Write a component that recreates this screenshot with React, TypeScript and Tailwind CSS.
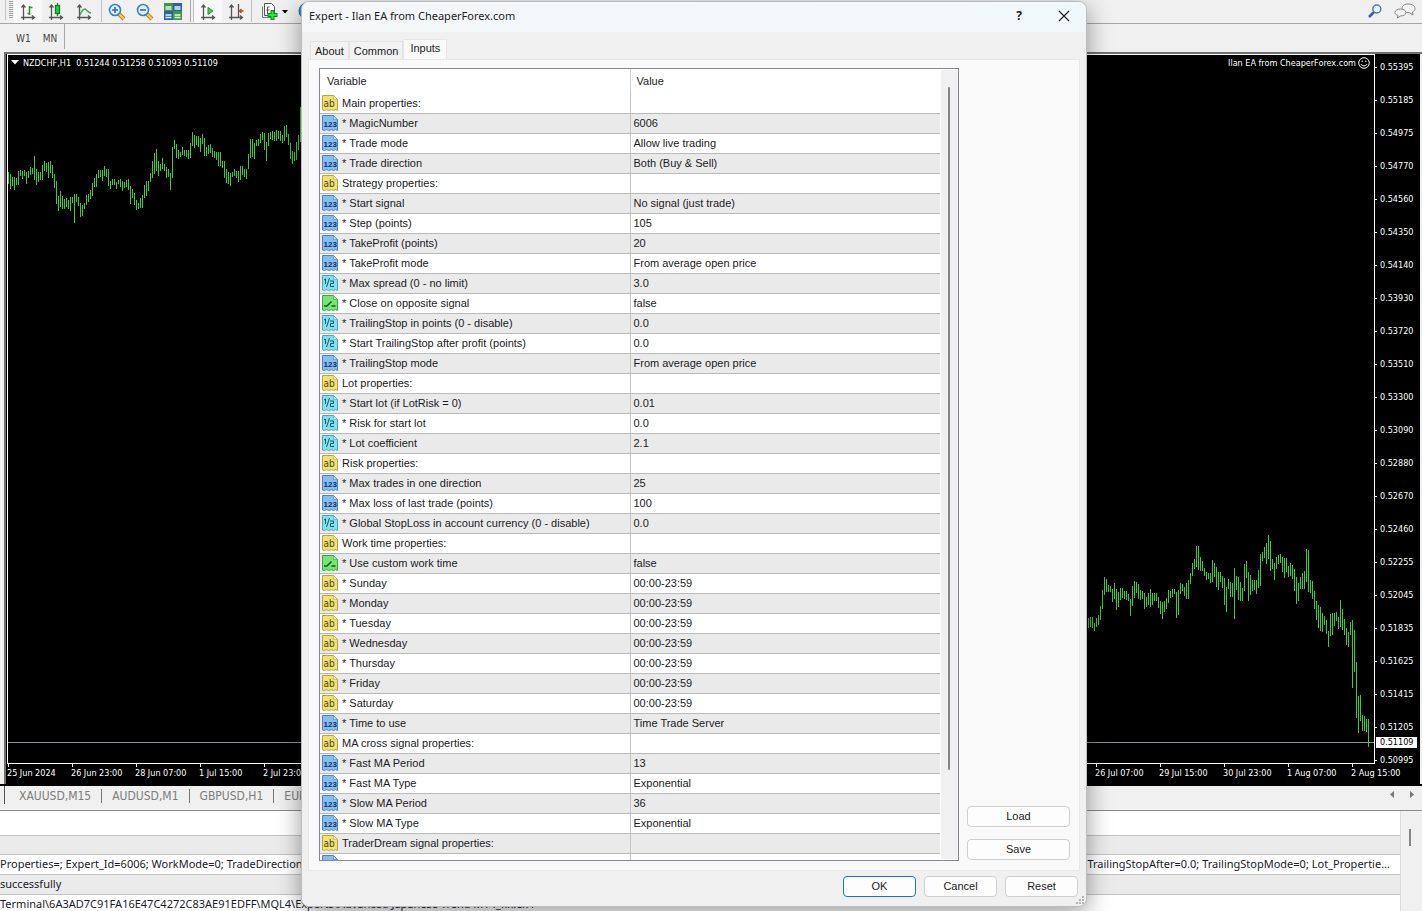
import { useState } from "react"
import type { ReactNode } from "react"

type ParamKind = "text" | "int" | "double" | "bool"

type ParamType = {
  kind: ParamKind
  name: string
  value: string
}

const params: ParamType[] = [
  { kind: "text", name: "Main properties:", value: "" },
  { kind: "int", name: "* MagicNumber", value: "6006" },
  { kind: "int", name: "* Trade mode", value: "Allow live trading" },
  { kind: "int", name: "* Trade direction", value: "Both (Buy & Sell)" },
  { kind: "text", name: "Strategy properties:", value: "" },
  { kind: "int", name: "* Start signal", value: "No signal (just trade)" },
  { kind: "int", name: "* Step (points)", value: "105" },
  { kind: "int", name: "* TakeProfit (points)", value: "20" },
  { kind: "int", name: "* TakeProfit mode", value: "From average open price" },
  { kind: "double", name: "* Max spread (0 - no limit)", value: "3.0" },
  { kind: "bool", name: "* Close on opposite signal", value: "false" },
  { kind: "double", name: "* TrailingStop in points (0 - disable)", value: "0.0" },
  { kind: "double", name: "* Start TrailingStop after profit (points)", value: "0.0" },
  { kind: "int", name: "* TrailingStop mode", value: "From average open price" },
  { kind: "text", name: "Lot properties:", value: "" },
  { kind: "double", name: "* Start lot (if LotRisk = 0)", value: "0.01" },
  { kind: "double", name: "* Risk for start lot", value: "0.0" },
  { kind: "double", name: "* Lot coefficient", value: "2.1" },
  { kind: "text", name: "Risk properties:", value: "" },
  { kind: "int", name: "* Max trades in one direction", value: "25" },
  { kind: "int", name: "* Max loss of last trade (points)", value: "100" },
  { kind: "double", name: "* Global StopLoss in account currency (0 - disable)", value: "0.0" },
  { kind: "text", name: "Work time properties:", value: "" },
  { kind: "bool", name: "* Use custom work time", value: "false" },
  { kind: "text", name: "* Sunday", value: "00:00-23:59" },
  { kind: "text", name: "* Monday", value: "00:00-23:59" },
  { kind: "text", name: "* Tuesday", value: "00:00-23:59" },
  { kind: "text", name: "* Wednesday", value: "00:00-23:59" },
  { kind: "text", name: "* Thursday", value: "00:00-23:59" },
  { kind: "text", name: "* Friday", value: "00:00-23:59" },
  { kind: "text", name: "* Saturday", value: "00:00-23:59" },
  { kind: "int", name: "* Time to use", value: "Time Trade Server" },
  { kind: "text", name: "MA cross signal properties:", value: "" },
  { kind: "int", name: "* Fast MA Period", value: "13" },
  { kind: "int", name: "* Fast MA Type", value: "Exponential" },
  { kind: "int", name: "* Slow MA Period", value: "36" },
  { kind: "int", name: "* Slow MA Type", value: "Exponential" },
  { kind: "text", name: "TraderDream signal properties:", value: "" },
  { kind: "int", name: "", value: "" },
]

const prices = [
  "0.55395", "0.55185", "0.54975", "0.54770", "0.54560", "0.54350", "0.54140", "0.53930",
  "0.53720", "0.53510", "0.53300", "0.53090", "0.52880", "0.52670", "0.52460", "0.52255",
  "0.52045", "0.51835", "0.51625", "0.51415", "0.51205", "0.50995",
]

const datesLeft = ["25 Jun 2024", "26 Jun 23:00", "28 Jun 07:00", "1 Jul 15:00", "2 Jul 23:00"]
const datesRight = ["26 Jul 07:00", "29 Jul 15:00", "30 Jul 23:00", "1 Aug 07:00", "2 Aug 15:00"]

// high/low of each bar, three units to a pixel
const barsLeft = [
  [247, 282], [252, 297], [262, 290], [262, 300], [265, 285], [242, 283], [240, 258], [243, 267],
  [241, 258], [246, 283], [244, 264], [231, 254], [235, 252], [197, 268], [237, 284], [246, 275],
  [247, 270], [225, 270], [212, 243], [220, 248], [215, 262], [213, 248], [225, 265], [252, 293],
  [272, 342], [318, 362], [304, 352], [318, 357], [326, 357], [325, 352], [330, 357], [320, 362],
  [322, 340], [312, 400], [312, 335], [320, 348], [338, 380], [344, 378], [340, 357], [316, 347],
  [313, 337], [300, 328], [280, 318], [265, 293], [253, 293], [241, 265], [241, 262], [241, 275],
  [229, 260], [237, 262], [237, 287], [272, 297], [268, 285], [267, 284], [275, 295], [270, 282],
  [267, 292], [273, 304], [275, 292], [270, 290], [267, 300], [288, 342], [298, 326], [308, 345],
  [330, 360], [338, 356], [325, 355], [316, 356], [286, 326], [272, 317], [272, 302], [250, 277],
  [213, 265], [190, 252], [177, 242], [213, 257], [222, 243], [205, 238], [222, 243], [230, 264],
  [237, 262], [250, 300], [172, 264], [150, 176], [162, 204], [180, 206], [186, 201], [172, 197],
  [180, 199], [180, 200], [180, 207], [159, 204], [126, 168], [136, 176], [137, 165], [138, 170],
  [144, 187], [132, 162], [144, 199], [170, 197], [165, 193], [163, 190], [175, 203], [184, 205],
  [187, 210], [187, 230], [186, 228], [212, 232], [212, 262], [237, 280], [245, 282], [249, 288],
  [247, 263], [238, 260], [242, 263], [243, 275], [229, 272], [229, 257], [237, 260], [237, 266],
  [192, 237], [148, 205], [147, 200], [158, 206], [150, 167], [147, 168], [132, 158], [126, 150],
  [130, 182], [155, 213], [129, 168], [126, 148], [124, 150], [126, 153], [121, 153], [123, 147],
  [122, 152], [135, 158], [107, 152], [106, 142], [132, 166], [158, 206], [183, 221], [186, 213],
  [155, 208], [136, 180], [50, 155],
]

const barsRight = [
  [293, 323], [290, 320], [290, 322], [308, 332], [295, 322], [285, 315], [258, 300], [210, 268],
  [171, 225], [178, 217], [195, 217], [198, 217], [207, 245], [190, 238], [208, 270], [216, 262],
  [204, 240], [204, 235], [213, 238], [213, 240], [222, 242], [238, 288], [198, 257], [183, 235],
  [185, 218], [192, 237], [211, 240], [212, 235], [218, 266], [230, 260], [220, 257], [207, 260],
  [220, 256], [219, 243], [220, 245], [232, 266], [243, 283], [246, 297], [242, 275], [234, 266],
  [210, 248], [213, 235], [208, 232], [208, 222], [216, 293], [211, 286], [190, 222], [193, 213],
  [202, 230], [190, 238], [180, 236], [160, 192], [130, 168], [116, 145], [78, 140], [78, 150],
  [110, 153], [123, 152], [144, 168], [155, 178], [160, 178], [160, 190], [120, 187], [128, 170],
  [140, 200], [157, 212], [155, 185], [168, 203], [175, 257], [200, 275], [178, 207], [187, 232],
  [190, 232], [145, 297], [168, 210], [170, 238], [185, 243], [205, 245], [132, 213], [122, 172],
  [155, 242], [165, 225], [180, 213], [180, 210], [180, 222], [150, 205], [103, 200], [95, 122],
  [80, 113], [68, 132], [44, 115], [62, 152], [118, 148], [128, 180], [110, 145], [105, 132],
  [102, 130], [110, 155], [113, 174], [115, 158], [138, 172], [128, 168], [135, 178], [148, 213],
  [172, 252], [188, 242], [170, 205], [158, 205], [152, 207], [87, 185], [90, 215], [180, 218],
  [182, 237], [213, 267], [243, 300], [256, 325], [262, 335], [278, 335], [288, 315], [300, 343],
  [333, 382], [283, 348], [280, 345], [280, 318], [276, 302], [290, 327], [240, 320], [268, 330],
  [298, 345], [325, 375], [335, 380], [305, 345], [300, 503], [330, 457], [425, 592], [528, 640],
  [525, 602], [585, 633], [587, 632], [597, 637], [597, 680],
]

function Bars({ bars, top, width }: { bars: number[][]; top: number; width: number }) {
  return (
    <svg width={width} height={708} className="block shrink-0" shapeRendering="crispEdges">
      {bars.map(([high, low], i) => (
        <rect
          key={i}
          x={i * 2}
          y={top + Math.round(high / 3)}
          width={1}
          height={Math.round((low - high) / 3)}
          fill="#43c443"
        />
      ))}
    </svg>
  )
}

const kindColors = {
  text: { fill: "#efe27a", edge: "#b8a53a", fold: "#fbf3b0", ink: "#4f470c" },
  int: { fill: "#86bdf0", edge: "#4d86c2", fold: "#bcdcfa", ink: "#0c2f66" },
  double: { fill: "#86dfec", edge: "#45a9bb", fold: "#c6f3f8", ink: "#0e5b74" },
  bool: { fill: "#78e478", edge: "#3aa846", fold: "#b9f5b4", ink: "#0d5c1c" },
}

function KindIcon({ kind }: { kind: ParamKind }) {
  const c = kindColors[kind]
  return (
    <svg width="16" height="16" viewBox="0 0 16 16" className="block shrink-0">
      <path
        d="M.5.5h11l4 4v11l-2-1-2 1-2-.8-3 .8-2-1-2 1-2-.5z"
        fill={c.fill}
        stroke={c.edge}
      />
      <path d="M11.500.5l4 4h-4z" fill={c.fold} stroke={c.edge} strokeWidth=".6" />
      {kind === "text" && (
        <text x="1.500" y="12" fontSize="10" fill={c.ink} fontFamily="DejaVu Sans Condensed">ab</text>
      )}
      {kind === "int" && (
        <text x="1.500" y="12" fontSize="8" fontWeight="bold" fill={c.ink} fontFamily="Liberation Sans">123</text>
      )}
      {kind === "double" && (
        <path d="M2 5l1.500-1v5M4.500 12l3-9M8 6h3.500v2.500H8.500v3h3.500" stroke={c.ink} fill="none" />
      )}
      {kind === "bool" && (
        <path d="M2 11h3l4.500-4.500M9.500 11h4" stroke={c.ink} strokeWidth="1.500" fill="none" />
      )}
    </svg>
  )
}

function ToolButton({ label, pressed, children }: { label: string; pressed?: boolean; children: ReactNode }) {
  return (
    <button
      type="button"
      aria-label={label}
      className={`flex h-[23px] w-7 shrink-0 items-center justify-center ${pressed ? "bg-[#f8f8f8]" : ""}`}
    >
      {children}
    </button>
  )
}

function Axes({ children }: { children: ReactNode }) {
  return (
    <svg width="16" height="18" viewBox="0 0 16 18" fill="none" stroke="#555" strokeWidth="1.300">
      <path d="M3.500 2v15M1 14.500h13M1.500 4.500l2-2.500 2 2.500M12 12.500l2.500 2-2.500 2" />
      {children}
    </svg>
  )
}

function Zoom({ plus }: { plus?: boolean }) {
  return (
    <svg width="18" height="18" viewBox="0 0 18 18" fill="none">
      <path d="M11 11l5 5" stroke="#a87f1a" strokeWidth="4" />
      <path d="M11 11l5 5" stroke="#f2cf4a" strokeWidth="2.400" />
      <circle cx="7" cy="7" r="5.500" fill="#e2f1fc" stroke="#3b7fc8" strokeWidth="1.600" />
      <path d={plus ? "M4 7h6M7 4v6" : "M4 7h6"} stroke="#2a6dbb" strokeWidth="1.600" />
    </svg>
  )
}

function Toolbar() {
  return (
    <header className="shrink-0 bg-[#f0f0f0]">
      <div className="flex h-6 items-start border-b border-[#a5a5a5]">
        <div className="ml-[5px] h-5 border-l border-[#c4c4c4]" />
        <div className="ml-[3px] mr-px mt-px h-[18px] w-1 bg-[repeating-linear-gradient(#a0a0a0_0_1px,#f0f0f0_1px_2px)]" />
        <ToolButton label="Bar chart" pressed>
          <Axes><path d="M9.500 3v9M7.500 10.500h2M9.500 4.500h3" stroke="#159a2c" strokeWidth="1.500" /></Axes>
        </ToolButton>
        <ToolButton label="Candlesticks">
          <Axes>
            <path d="M9.500 0v13" stroke="#12802a" />
            <rect x="7.500" y="2.500" width="4" height="8" fill="#22d03c" stroke="#12802a" />
          </Axes>
        </ToolButton>
        <ToolButton label="Line chart">
          <Axes><path d="M4 12c2-5 4-6 5-6s2 3 6 4" stroke="#3fa34d" /></Axes>
        </ToolButton>
        <div className="ml-[3px] mr-px h-[22px] border-l border-[#c0c0c0]" />
        <ToolButton label="Zoom in"><Zoom plus /></ToolButton>
        <ToolButton label="Zoom out"><Zoom /></ToolButton>
        <ToolButton label="Tile windows">
          <svg width="18" height="17" viewBox="0 0 18 17">
            <rect width="9" height="8" fill="#3f9a36" />
            <rect x="9" width="9" height="8" fill="#2c5fb4" />
            <rect y="8" width="9" height="9" fill="#2c5fb4" />
            <rect x="9" y="8" width="9" height="9" fill="#3f9a36" />
            <path d="M1.500 4h6M10.500 4h6M1.500 6h6M10.500 6h6M1.500 12h6M10.500 12h6M1.500 14.500h6M10.500 14.500h6" stroke="#e9f2f4" strokeWidth="1.500" />
          </svg>
        </ToolButton>
        <div className="ml-[3px] mr-0.5 h-[22px] border-l border-[#a8a8a8]" />
        <div className="h-[22px] border-l border-[#c0c0c0]" />
        <ToolButton label="Auto scroll" pressed>
          <Axes><path d="M8 4.500v7l5-3.500z" fill="#43cf55" stroke="#159a2c" strokeWidth="1" /></Axes>
        </ToolButton>
        <ToolButton label="Chart shift">
          <Axes>
            <path d="M10.500 1v13" />
            <path d="M11.500 8h4M13.500 6l-2 2 2 2" stroke="#c0431c" />
          </Axes>
        </ToolButton>
        <div className="ml-px mr-[5px] h-[22px] border-l border-[#c0c0c0]" />
        <button type="button" aria-label="Indicators" className="flex h-[23px] shrink-0 items-center gap-1 pl-1">
          <svg width="17" height="19" viewBox="0 0 17 19" fill="none">
            <path d="M3.500 1.500h7l3 3v9h-10z" fill="#fff" stroke="#555" />
            <path d="M1.500 4.500v11h8" stroke="#777" />
            <path d="M8.500 5h-2v7M5.500 8h3" stroke="#555" />
            <path d="M11.500 8v10M6.500 13h10" stroke="#0c8a1d" strokeWidth="4" />
            <path d="M11.500 9v8M7.500 13h8" stroke="#2fe04a" strokeWidth="2" />
          </svg>
          <svg width="6" height="4" viewBox="0 0 6 4"><path d="M0 0h6L3 3.500z" fill="#000" /></svg>
        </button>
        <svg width="18" height="18" viewBox="0 0 18 18" className="ml-2.5 mt-0.5 shrink-0">
          <circle cx="9" cy="9" r="8" fill="#3b8fd2" stroke="#236aa6" />
          <path d="M9 4v5h4" stroke="#fff" strokeWidth="1.500" fill="none" />
        </svg>
        <div className="ml-auto mr-1.5 flex h-[21px] items-center gap-3">
          <button type="button" aria-label="Search">
            <svg width="14" height="14" viewBox="0 0 14 14" fill="none">
              <path d="M6 8l-5 5" stroke="#3a5cb8" strokeWidth="2.600" />
              <circle cx="8.800" cy="5" r="4" fill="#eef4fd" stroke="#4a74c9" strokeWidth="1.500" />
            </svg>
          </button>
          <button type="button" aria-label="Chat">
            <svg width="22" height="16" viewBox="0 0 22 16" fill="#f4f4f4" stroke="#808080">
              <path d="M14 1c4 0 7 1.800 7 4.500 0 1.600-1 2.800-2.500 3.500l.5 3-3.500-2.300C11 9.800 8 8.500 8 5.500 8 2.800 10.500 1 14 1z" />
              <path d="M6.500 6C9.500 6 12 7.400 12 9.500S9.500 13 6.500 13l-3 2 .3-2.800C2 11.800 1 10.800 1 9.500 1 7.400 3.500 6 6.500 6z" />
            </svg>
          </button>
        </div>
      </div>
      <div className="flex h-7 items-start text-[10px] text-[#444] font-['DejaVu_Sans_Condensed',sans-serif]">
        <div className="flex h-[25px] items-center gap-3 border-r border-[#a8a8a8] pl-4 pr-[7px] pt-1">
          <button type="button">W1</button>
          <button type="button">MN</button>
        </div>
      </div>
    </header>
  )
}

function Chart() {
  return (
    <section className="flex min-h-0 flex-1 bg-[#f0f0f0] text-[9px] leading-[14px] text-white font-['DejaVu_Sans_Condensed',sans-serif]">
      <div className="w-1 shrink-0" />
      <div className="flex min-w-0 flex-1 border-l-2 border-t-2 border-[#707070] bg-black pl-px">
        <div className="flex min-w-0 flex-1 flex-col">
          <div className="relative flex h-[710px] shrink-0 justify-between border border-white">
            <Bars bars={barsLeft} top={35} width={294} />
            <Bars bars={barsRight} top={465} width={286} />
            <div className="absolute inset-x-0 top-[687px] h-px bg-[#8a949c]" />
            <div className="absolute inset-x-0 top-0 flex items-center justify-between pl-[3px] pr-1">
              <div className="flex items-center">
                <svg width="8" height="5" viewBox="0 0 8 5" className="mr-1"><path d="M0 0h8L4 4.500z" fill="#fff" /></svg>
                <span className="whitespace-pre">NZDCHF,H1  0.51244 0.51258 0.51093 0.51109</span>
              </div>
              <div className="flex items-center gap-0.5 pt-px">
                <span>Ilan EA from CheaperForex.com</span>
                <svg width="12" height="12" viewBox="0 0 12 12" fill="none" stroke="#fff">
                  <circle cx="6" cy="6" r="5.300" />
                  <path d="M3 7c1 2.500 5 2.500 6 0M4.200 3.500v1.500M7.800 3.500v1.500" />
                </svg>
              </div>
            </div>
          </div>
          <div className="flex justify-between">
            <Dates dates={datesLeft} />
            <Dates dates={datesRight} />
          </div>
        </div>
        <div className="relative flex w-[47px] shrink-0 flex-col gap-[19px] border-r-2 border-[#f0f0f0] pt-1.5">
          {prices.map((price) => (
            <div key={price} className="flex items-center gap-[3px]">
              <span className="h-px w-0.5 bg-white" />
              {price}
            </div>
          ))}
          <div className="absolute left-px top-[683px] bg-white px-1 leading-[11px] text-black">0.51109</div>
        </div>
      </div>
    </section>
  )
}

function Dates({ dates }: { dates: string[] }) {
  return (
    <div className="flex leading-3 last:-mr-10">
      {dates.map((date) => (
        <div key={date} className="w-16 whitespace-nowrap">
          <div className="ml-px h-[3px] w-px bg-white" />
          {date}
        </div>
      ))}
    </div>
  )
}

function ChartTabs() {
  return (
    <nav className="flex h-[27px] shrink-0 items-start border-b border-[#8c8c8c] border-t-2 border-t-black bg-[#f0f0f0] text-xs text-[#7c7c7c] font-['DejaVu_Sans_Condensed',sans-serif]">
      <div className="ml-1 mr-1 h-[18px] border-l border-[#555]" />
      {["XAUUSD,M15", "AUDUSD,M1", "GBPUSD,H1", "EURUSD,H1"].map((tab) => (
        <button key={tab} type="button" className="mt-[3px] h-[14px] border-r border-[#777] px-2.5 leading-[14px]">
          {tab}
        </button>
      ))}
      <div className="ml-auto mr-2 flex gap-4 pt-[5px]">
        <button type="button" aria-label="Previous tabs">
          <svg width="4" height="7" viewBox="0 0 4 7"><path d="M4 0v7L0 3.500z" fill="#777" /></svg>
        </button>
        <button type="button" aria-label="Next tabs">
          <svg width="4" height="7" viewBox="0 0 4 7"><path d="M0 0v7l4-3.500z" fill="#777" /></svg>
        </button>
      </div>
    </nav>
  )
}

function Log() {
  return (
    <footer className="flex h-[100px] shrink-0 overflow-hidden bg-[#f0f0f0] text-[11px] leading-[18px] text-[#1a1a2a] font-['Noto_Sans','Open_Sans',sans-serif]">
      <div className="min-w-0 flex-1 whitespace-nowrap border-r border-[#dcdcdc]">
        <div className="h-[25px] border-b border-[#c3c3c3] bg-white" />
        <div className="h-[19px] border-b border-[#c3c3c3] bg-[#ebebeb]" />
        <div className="flex h-5 justify-between border-b border-[#c3c3c3] bg-white pr-2.5">
          <span>Properties=; Expert_Id=6006; WorkMode=0; TradeDirection=0;</span>
          <span>TrailingStopAfter=0.0; TrailingStopMode=0; Lot_Propertie...</span>
        </div>
        <div className="h-5 border-b border-[#c3c3c3] bg-[#ebebeb]">successfully</div>
        <div className="h-4 bg-white">
          Terminal\6A3AD7C91FA16E47C4272C83AE91EDFF\MQL4\Experts\Advanced Japanese Trend M14_fix.ex4
        </div>
      </div>
      <div className="flex w-[21px] shrink-0 justify-center pt-[18px]">
        <div className="mr-[3px] h-[17px] w-0.5 bg-[#858585]" />
      </div>
    </footer>
  )
}

function DialogButton({ children, primary }: { children: ReactNode; primary?: boolean }) {
  return (
    <button
      type="button"
      className={`h-[21px] w-[73px] rounded border bg-[#fdfdfd] text-[11px] leading-[19px] ${primary ? "border-[#1a75bb]" : "border-[#cfcfcf]"}`}
    >
      {children}
    </button>
  )
}

function ExpertDialog() {
  const [tab, setTab] = useState("Inputs")

  return (
    <div
      role="dialog"
      aria-label="Expert properties"
      className="absolute left-[301px] top-px flex h-[906px] w-[786px] flex-col rounded-lg border border-[#b9bdc2] bg-[#f0f0f0] text-[#1b1b24] shadow-[0_6px_24px_rgba(0,0,0,0.4)] font-['Liberation_Sans',Arial,sans-serif]"
    >
      <div className="flex h-[30px] shrink-0 items-center rounded-t-lg bg-linear-to-r from-[#f5f7f8] to-[#f1f8fc] pb-0.5 pl-[7px] pr-4">
        <h1 className="text-[11px] font-['Noto_Sans','Open_Sans',sans-serif]">Expert - Ilan EA from CheaperForex.com</h1>
        <div className="ml-auto flex items-center gap-9">
          <button type="button" aria-label="Help" className="text-xs font-bold font-['Open_Sans',sans-serif]">?</button>
          <button type="button" aria-label="Close">
            <svg width="12" height="12" viewBox="0 0 12 12"><path d="M1 1l10 10M11 1L1 11" stroke="#222" strokeWidth="1.200" /></svg>
          </button>
        </div>
      </div>

      <div role="tablist" className="flex h-[27px] shrink-0 items-end pl-2 text-[11px] leading-4">
        {["About", "Common", "Inputs"].map((name) => (
          <button
            key={name}
            type="button"
            role="tab"
            aria-selected={tab === name}
            onClick={() => setTab(name)}
            className={
              tab === name
                ? "h-5 border border-b-0 border-[#e6e6e6] bg-[#f9f9f9] px-1.5 pb-1"
                : "h-[18px] border border-b-0 border-[#e3e3e3] bg-[#f2f2f2] px-1"
            }
          >
            {name}
          </button>
        ))}
      </div>

      <div className="mx-1.5 flex min-h-0 flex-1 items-stretch border border-[#e8e8e8] bg-[#f9f9f9] pb-[9px] pl-2.5 pr-[9px] pt-2">
        <div className="flex min-w-0 flex-1 overflow-hidden border border-[#828790] bg-white">
          <table className="min-w-0 flex-1 table-fixed self-start border-collapse text-left text-[11px] leading-4">
            <thead>
              <tr className="h-6">
                <th scope="col" className="w-1/2 border-r border-[#d0d0d0] pl-[7px] font-normal">Variable</th>
                <th scope="col" className="w-1/2 pl-1.5 font-normal">Value</th>
              </tr>
            </thead>
            <tbody>
              {params.map((param, i) => (
                <tr key={i} className="h-5 border-b border-[#b9b9b9] even:bg-[#eaeaea]">
                  <td className="border-r border-[#c4c4c4] p-0 pl-0.5">
                    <div className="flex h-[19px] items-center gap-1 whitespace-nowrap">
                      <KindIcon kind={param.kind} />
                      {param.name}
                    </div>
                  </td>
                  <td className="p-0 pl-[3px]">{param.value}</td>
                </tr>
              ))}
            </tbody>
          </table>
          <div className="mb-px ml-px mt-px flex w-[17px] shrink-0 justify-center bg-[#f0f0f0] pt-[17px]">
            <div className="mr-px h-[683px] w-0.5 rounded bg-[#858585]" />
          </div>
        </div>
        <div className="ml-2 flex w-[103px] shrink-0 flex-col justify-end gap-3 pb-px [&>button]:w-full">
          <DialogButton>Load</DialogButton>
          <DialogButton>Save</DialogButton>
        </div>
      </div>

      <div className="relative flex h-[35px] shrink-0 justify-end gap-2 pr-2 pt-[5px]">
        <DialogButton primary>OK</DialogButton>
        <DialogButton>Cancel</DialogButton>
        <DialogButton>Reset</DialogButton>
        <svg width="8" height="8" viewBox="0 0 8 8" className="absolute bottom-0.5 right-0.5" fill="#b5b5b5">
          <path d="M6 0h2v2H6zM3 3h2v2H3zM6 3h2v2H6zM0 6h2v2H0zM3 6h2v2H3zM6 6h2v2H6z" />
        </svg>
      </div>
    </div>
  )
}

function App() {
  return (
    <main className="relative flex h-screen flex-col overflow-hidden bg-[#f0f0f0]">
      <Toolbar />
      <Chart />
      <ChartTabs />
      <Log />
      <ExpertDialog />
    </main>
  )
}

export default App
